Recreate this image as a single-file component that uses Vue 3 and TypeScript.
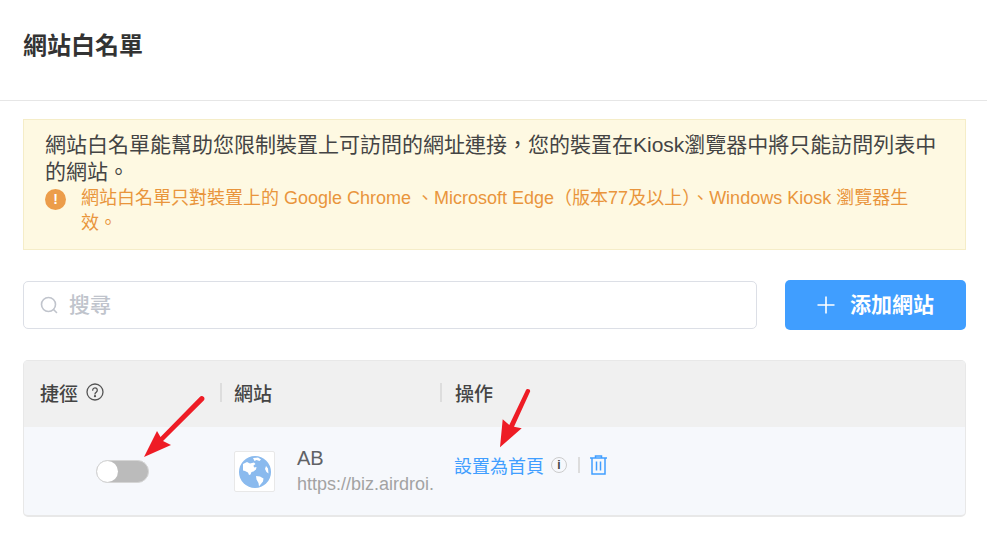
<template>
  <div class="page">
    <header class="page-head">網站白名單</header>

    <div class="content">
      <div class="notice">
        <p class="notice-main">網站白名單能幫助您限制裝置上可訪問的網址連接，您的裝置在Kiosk瀏覽器中將只能訪問列表中的網站。</p>
        <div class="notice-warn">
          <span class="warn-icon">!</span>
          <span>網站白名單只對裝置上的 Google Chrome 、Microsoft Edge（版本77及以上）、Windows Kiosk 瀏覽器生效。</span>
        </div>
      </div>

      <div class="toolbar">
        <div class="search">
          <svg class="search-icon" viewBox="0 0 18 18" width="18" height="18" fill="none" stroke="#c0c4cc" stroke-width="1.6">
            <circle cx="8.500" cy="8.500" r="7" />
            <path d="M13.500 13.500l3 3" stroke-linecap="round" />
          </svg>
          <span class="placeholder">搜尋</span>
        </div>
        <button class="add-btn">
          <svg viewBox="0 0 18 18" width="18" height="18" stroke="#fff" stroke-width="1.6">
            <path d="M9 0.500v17M0.500 9h17" />
          </svg>
          <span class="add-label">添加網站</span>
        </button>
      </div>

      <div class="table">
        <div class="row thead">
          <div class="col col-short">
            <span>捷徑</span>
            <svg viewBox="0 0 18 18" width="18" height="18" fill="none" stroke="#555" stroke-width="1.300">
              <circle cx="9" cy="9" r="8" />
              <path d="M6.700 7.200a2.300 2.300 0 1 1 3.600 1.900c-.8.500-1.300 1-1.300 2" stroke-linecap="round" />
              <circle cx="9" cy="13.200" r=".5" fill="#555" />
            </svg>
          </div>
          <div class="col col-site"><i class="sep"></i><span>網站</span></div>
          <div class="col col-ops"><i class="sep sep-ops"></i><span>操作</span></div>
        </div>
        <div class="row tbody">
          <div class="col col-short">
            <div class="switch"><span class="knob"></span></div>
          </div>
          <div class="col col-site">
            <div class="site-icon">
              <svg viewBox="0 0 32 32" width="32" height="32">
                <circle cx="16" cy="16" r="16" fill="#8abaee" />
                <path fill="#fff" d="M4 8l4-2 3 1.500 4-1 1.500 1.500-2 1.500.5 2 2.500-.5-.5 2.500-2.500 2-2 .5-1 2.500-1.500.5-1-2.500-3-1.500-2-.5zM14 2l5-.5 3 2-1.500 1.500-3-1-2 1zM17 20l4 .5 3.500 2-.5 3-2.500 3-1.500 2-.5-3.500-2-3.500zM27 10l2 2.500.5 5-2-1.500-1.500-3z" />
              </svg>
            </div>
            <div class="site-text">
              <div class="site-name">AB</div>
              <div class="site-url">https://biz.airdroi.</div>
            </div>
          </div>
          <div class="col col-ops">
            <a class="link">設置為首頁</a>
            <span class="info">i</span>
            <i class="sep-small"></i>
            <svg class="trash" viewBox="0 0 17 20" width="17" height="20" fill="none" stroke="#409eff" stroke-width="1.500">
              <path d="M0 3h17M5.500 3V1h6v2M2 3v16h13V3M6.500 6.500v9M10.500 6.500v9" />
            </svg>
          </div>
        </div>
      </div>
    </div>

    <svg class="arrow arrow-left" viewBox="0 0 70 70" width="70" height="70">
      <path fill="#ee1c25" d="M3 65L16 39l3.500 6L59 4.700c2-2 6 1 4 3.500L22 49l8 4z" />
    </svg>
    <svg class="arrow arrow-right" viewBox="0 0 40 64" width="40" height="64">
      <path fill="#ee1c25" d="M2 60.300L4.700 32.300 11.300 38 28 3c1-2 5-1 4 1.700L16 39.700l7.700 1.600z" />
    </svg>
  </div>
</template>

<script setup lang="ts">
</script>

<style>
body { background: #fff; }
</style>

<style scoped>
.page { position: relative; width: 987px; height: 534px; overflow: hidden; background: #fff; font-family: "Liberation Sans", "Noto Sans CJK TC", sans-serif; color: #333; }

.page-head { height: 100px; border-bottom: 1px solid #e6e6e6; padding-left: 23px; font-size: 24px; line-height: 92px; font-weight: 700; color: #333; }

.content { padding: 18px 21px 0 23px; }

.notice { height: 131px; box-sizing: border-box; background: #fef9e2; border: 1px solid #f5edc8; padding: 11px 21px; }
.notice-main { margin: 0; font-size: 21px; line-height: 27px; color: #444; }
.notice-warn { display: flex; align-items: flex-start; gap: 15px; margin-top: 1px; padding-right: 30px; font-size: 18px; line-height: 25px; color: #e9953c; }
.warn-icon { flex: none; width: 21px; height: 21px; margin-top: 3px; border-radius: 50%; background: #ec9d4a; color: #fff; font-size: 14px; line-height: 21px; font-weight: 700; text-align: center; }

.toolbar { display: flex; align-items: center; justify-content: space-between; margin-top: 30px; }
.search { width: 734px; height: 48px; box-sizing: border-box; display: flex; align-items: center; gap: 11px; padding: 0 0 0 16px; border: 1px solid #dcdfe6; border-radius: 5px; }
.placeholder { font-size: 21px; color: #c0c4cc; font-weight: 500; padding-bottom: 5px; }
.add-btn { width: 181px; height: 50px; display: flex; align-items: center; justify-content: center; gap: 15px; border: 0; border-radius: 5px; background: #409eff; color: #fff; font-family: inherit; font-size: 21px; font-weight: 700; padding: 0; }
.add-label { padding-bottom: 5px; }

.table { margin-top: 30px; height: 157px; box-sizing: border-box; background: #f6f8fc; border: 1px solid #e8e8e8; border-bottom-width: 2px; border-radius: 5px; overflow: hidden; }
.row { display: flex; }
.thead { height: 66px; background: #f0f0f0; font-size: 19px; font-weight: 500; color: #444; }
.tbody { height: 89px; }
.col { display: flex; align-items: center; }
.col-short { width: 196px; padding-left: 16px; gap: 8px; box-sizing: border-box; }
.col-site { width: 220px; box-sizing: border-box; }
.col-ops { flex: 1; }
.thead .col { padding-bottom: 4px; }
.sep { width: 2px; height: 19px; margin-right: 12px; background: #ddd; }
.sep-ops { margin-right: 13px; }

.tbody .col-short { padding-left: 72px; }
.switch { width: 53px; height: 23px; box-sizing: border-box; border: 1px solid #d5d5d5; border-radius: 12px; background: #bbb; }
.knob { display: block; width: 21px; height: 21px; border-radius: 50%; background: #fff; }

.tbody .col-site { padding-left: 14px; }
.site-icon { width: 41px; height: 41px; flex: none; box-sizing: border-box; display: flex; align-items: center; justify-content: center; background: #fff; border: 1px solid #e8e8e8; border-radius: 2px; }
.site-text { margin-left: 22px; width: 137px; }
.site-name { font-size: 20px; line-height: 26px; margin-top: -1px; color: #606266; }
.site-url { font-size: 18px; line-height: 26px; color: #a3a3a3; white-space: nowrap; }

.tbody .col-ops { padding: 0 0 13px 14px; }
.link { font-size: 18px; color: #409eff; }
.info { width: 16px; height: 16px; margin-left: 7px; box-sizing: border-box; border: 1px solid #ccc; border-radius: 50%; font-size: 12px; line-height: 14px; text-align: center; font-weight: 700; color: #444; }
.sep-small { width: 2px; height: 16px; margin: 0 10px 0 11px; background: #ddd; }

.arrow { position: absolute; }
.arrow-left { left: 141px; top: 392px; }
.arrow-right { left: 498px; top: 387px; }
</style>
